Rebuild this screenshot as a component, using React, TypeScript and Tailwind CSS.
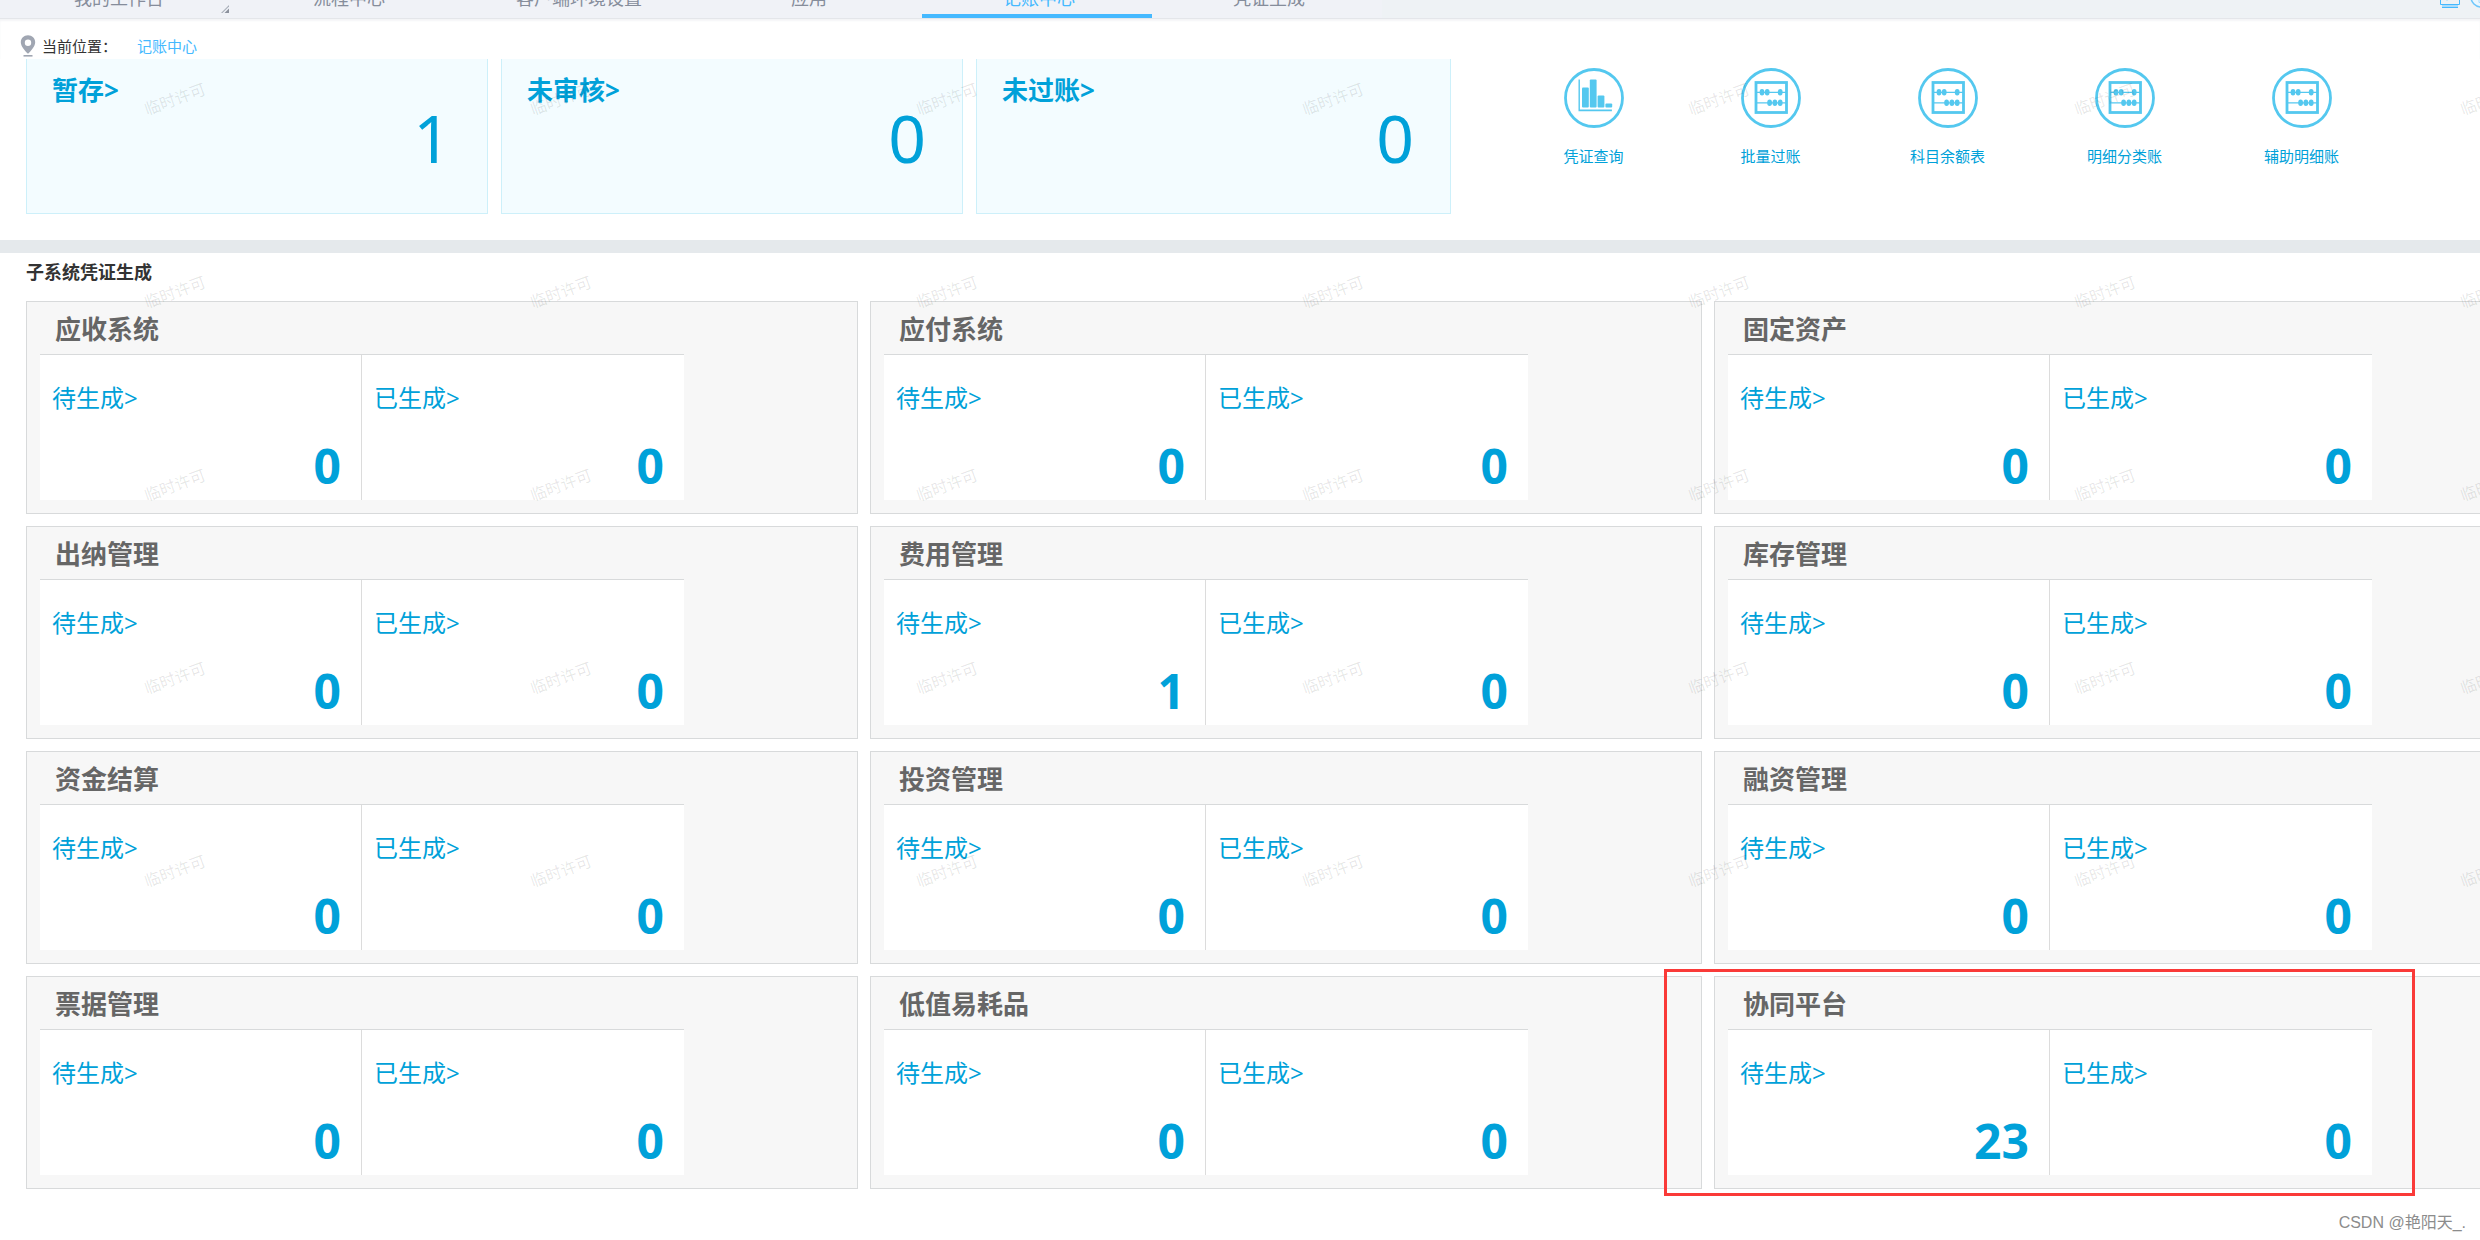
import { useState } from "react";

type summary = { label: string; count: number };
type subsystem = { name: string; pending: number; generated: number; highlighted?: boolean };

const tabs = ["我的工作台", "流程中心", "客户端环境设置", "应用", "记账中心", "凭证生成"];

const summaries: summary[] = [
   { label: "暂存", count: 1 },
   { label: "未审核", count: 0 },
   { label: "未过账", count: 0 },
];

const shortcuts = ["凭证查询", "批量过账", "科目余额表", "明细分类账", "辅助明细账"];

const subsystems: subsystem[] = [
   { name: "应收系统", pending: 0, generated: 0 },
   { name: "应付系统", pending: 0, generated: 0 },
   { name: "固定资产", pending: 0, generated: 0 },
   { name: "出纳管理", pending: 0, generated: 0 },
   { name: "费用管理", pending: 1, generated: 0 },
   { name: "库存管理", pending: 0, generated: 0 },
   { name: "资金结算", pending: 0, generated: 0 },
   { name: "投资管理", pending: 0, generated: 0 },
   { name: "融资管理", pending: 0, generated: 0 },
   { name: "票据管理", pending: 0, generated: 0 },
   { name: "低值易耗品", pending: 0, generated: 0 },
   { name: "协同平台", pending: 23, generated: 0, highlighted: true },
];

const PinIcon = () => (
   <svg className="w-4 h-[22px] shrink-0" viewBox="0 0 16 22" fill="#a0a6b2">
      <path
         fillRule="evenodd"
         d="M8 0.3c4.1 0 7.2 3 7.2 7 0 4.2-4.4 8.8-7.2 11.5C5.2 16.1.8 11.5.8 7.3c0-4 3.1-7 7.2-7Zm0 4.2a3.2 3.2 0 1 0 0 6.4 3.2 3.2 0 0 0 0-6.4Z"
      />
      <path d="M3.5 20h9v1.6h-9z" />
   </svg>
);

const ChartIcon = () => (
   <svg className="w-[60px] h-[60px]" viewBox="0 0 60 60" fill="#54c8ef">
      <circle cx="30" cy="30" r="28.5" fill="none" stroke="#54c8ef" strokeWidth="2.8" />
      <path d="M14.5 11.5h1.4v30h32v1.8H14.5z" />
      <rect x="18" y="19.5" width="6.8" height="20" rx="1" />
      <rect x="25.8" y="11.5" width="6.8" height="28" rx="1" />
      <rect x="33.6" y="27.5" width="6.8" height="12" rx="1" />
      <rect x="41.4" y="35.5" width="6.8" height="4" rx="1" />
   </svg>
);

const AbacusIcon = () => (
   <svg className="w-[60px] h-[60px]" viewBox="0 0 60 60" fill="#54c8ef">
      <circle cx="30" cy="30" r="28.5" fill="none" stroke="#54c8ef" strokeWidth="2.8" />
      <rect x="15" y="14.5" width="30.5" height="30" fill="none" stroke="#54c8ef" strokeWidth="2.8" />
      <path d="M16 23.7h29v1.2H16zM16 34.2h29v1.2H16z" />
      <ellipse cx="21" cy="24.3" rx="2.4" ry="3.3" />
      <ellipse cx="26.2" cy="24.3" rx="2.4" ry="3.3" />
      <ellipse cx="39.2" cy="24.3" rx="2.4" ry="3.3" />
      <ellipse cx="28.6" cy="34.8" rx="2.4" ry="3.3" />
      <ellipse cx="33.9" cy="34.8" rx="2.4" ry="3.3" />
      <ellipse cx="39.2" cy="34.8" rx="2.4" ry="3.3" />
   </svg>
);

const Header: React.FC<{ active: string; setActive: Function }> = ({ active, setActive }) => (
   <header className="relative z-10 flex items-end h-[18px] overflow-hidden bg-[#eef2f5]">
      <nav className="flex h-12 shrink-0 bg-[#f0f2f7] pl-[2px]">
         {tabs.map((tab, index) => (
            <button
               key={tab}
               onClick={() => setActive(tab)}
               className={`relative w-[230px] h-12 flex flex-col justify-end cursor-pointer text-lg ${
                  tab === active ? "text-[#45b9ff]" : "text-[#868d9b]"
               }`}
            >
               <span className="w-full pl-1 pb-[6px] leading-5 text-center">{tab}</span>
               <span className={`w-full h-1 ${tab === active ? "bg-[#45b9ff]" : ""}`} />
               {index === 0 ? (
                  <svg className="absolute right-[3px] bottom-[5px] w-2 h-2" viewBox="0 0 8 8">
                     <path d="M8 0v1.5L1.5 8H0z" fill="#a7adb8" />
                     <path d="M8 3.5V8H3.5z" fill="#8b919d" />
                  </svg>
               ) : null}
            </button>
         ))}
      </nav>
      <div className="flex h-[18px] gap-[9px] ml-auto -mr-3 shrink-0">
         <button aria-label="桌面" className="w-[22px] h-[18px]">
            <svg className="w-[22px] h-[18px]" viewBox="0 0 22 18">
               <path d="M1.5-4V4.5h19V-4" fill="none" stroke="#45b9ff" />
               <path d="M3 5h16v2H3z" fill="#a9dcfb" />
               <path d="M3 7h16v1H3z" fill="#45b9ff" />
               <path d="M7 0h2" stroke="#a9dcfb" />
            </svg>
         </button>
         <button aria-label="帮助" className="w-[22px] h-[18px]">
            <svg className="w-[22px] h-[18px]" viewBox="0 0 22 18">
               <circle cx="11" cy="-3" r="10" fill="#eaf6fe" stroke="#6cc6fb" strokeWidth="1.5" />
               <path d="M9 0v2.5h4V0" fill="none" stroke="#a9dcfb" />
            </svg>
         </button>
      </div>
   </header>
);

const CountCell: React.FC<{ label: string; count: number; divider?: boolean }> = ({ label, count, divider }) => (
   <div className={`pt-[27px] pl-3 pr-5 pb-[6px] ${divider ? "border-r border-[#dcdcdc]" : ""}`}>
      <a href="#" className="block text-2xl leading-8">
         {label}&gt;
      </a>
      <div className="mt-6 text-5xl leading-[56px] font-bold text-right">{count}</div>
   </div>
);

const SubsystemPanel: React.FC<{ system: subsystem }> = ({ system }) => (
   <article className="relative pt-[2px] pl-[13px] pb-[13px] border border-[#d8dadb] bg-[#f7f7f7]">
      <h3 className="pl-[15px] text-[26px] leading-[50px] font-bold text-[#666]">{system.name}</h3>
      <div className="grid grid-cols-2 mr-[173px] border-t border-[#d8dadb] bg-white text-[#00a1d9]">
         <CountCell label="待生成" count={system.pending} divider />
         <CountCell label="已生成" count={system.generated} />
      </div>
      {system.highlighted ? (
         <div className="absolute -inset-y-2 -left-[51px] w-[751px] border-3 border-[#fa3a38] pointer-events-none" />
      ) : null}
   </article>
);

// licence notice repeated over the whole page
const Watermark = () => (
   <div aria-hidden className="absolute inset-x-0 top-0 z-20 overflow-hidden pointer-events-none">
      <div className="grid grid-cols-[repeat(7,386px)] auto-rows-[193px] pt-[2px]">
         {Array.from({ length: 35 }, (_, i) => (
            <div key={i} className="flex items-center pl-[143px]">
               <span className="text-base leading-5 text-black/10 -rotate-20">临时许可</span>
            </div>
         ))}
      </div>
   </div>
);

export default function App() {
   const [active, setActive] = useState("记账中心");

   return (
      <div className="relative min-h-screen overflow-hidden bg-white font-['Open_Sans','Noto_Sans_CJK_SC',sans-serif]">
         <Header active={active} setActive={setActive} />
         <div className="h-[41px] flex items-center pl-5 pt-[14px] text-[15px] border-t border-[#e4e6ea] shadow-[inset_0_2px_2px_#f4f5f7]">
            <PinIcon />
            <span className="pl-[6px] leading-5 text-[#333]">当前位置：</span>
            <a href="#" className="pl-5 leading-5 text-[#45b9ff]">
               记账中心
            </a>
         </div>

         <main>
            <section className="grid grid-cols-[1425fr_1029fr] pl-[26px] pb-[26px] text-[#00a1d9]">
               <div className="grid grid-cols-[462fr_462fr_475fr] gap-[13px]">
                  {summaries.map((item) => (
                     <div key={item.label} className="h-[155px] pt-[17px] pl-[25px] pr-9 border border-t-0 border-[#cdf0fa] bg-[#f3fcff]">
                        <a href="#" className="block text-[26px] leading-7 font-bold">
                           {item.label}&gt;
                        </a>
                        <div className="text-[66px] leading-[66px] text-right font-['Noto_Sans',sans-serif]">{item.count}</div>
                     </div>
                  ))}
               </div>
               <div className="grid grid-cols-5 pt-[9px] pl-[54px] pr-[90px]">
                  {shortcuts.map((name, index) => (
                     <a key={name} href="#" className="flex flex-col items-center gap-[18px] text-[15px] leading-5">
                        {index === 0 ? <ChartIcon /> : <AbacusIcon />}
                        {name}
                     </a>
                  ))}
               </div>
            </section>

            <div className="h-[13px] bg-[#e5e9ec]" />

            <section className="pl-[26px] pt-[7px]">
               <h2 className="text-lg leading-6 font-bold text-[#333]">子系统凭证生成</h2>
               <div className="grid grid-cols-[repeat(3,minmax(832px,1fr))] gap-3 mt-[17px]">
                  {subsystems.map((system) => (
                     <SubsystemPanel key={system.name} system={system} />
                  ))}
               </div>
            </section>
         </main>

         <footer className="pt-[22px] pr-[14px] text-base leading-6 text-right text-[#8c8c8c] font-['Liberation_Sans','Noto_Sans_CJK_SC',sans-serif]">
            CSDN @艳阳天_.
         </footer>
         <Watermark />
      </div>
   );
}
